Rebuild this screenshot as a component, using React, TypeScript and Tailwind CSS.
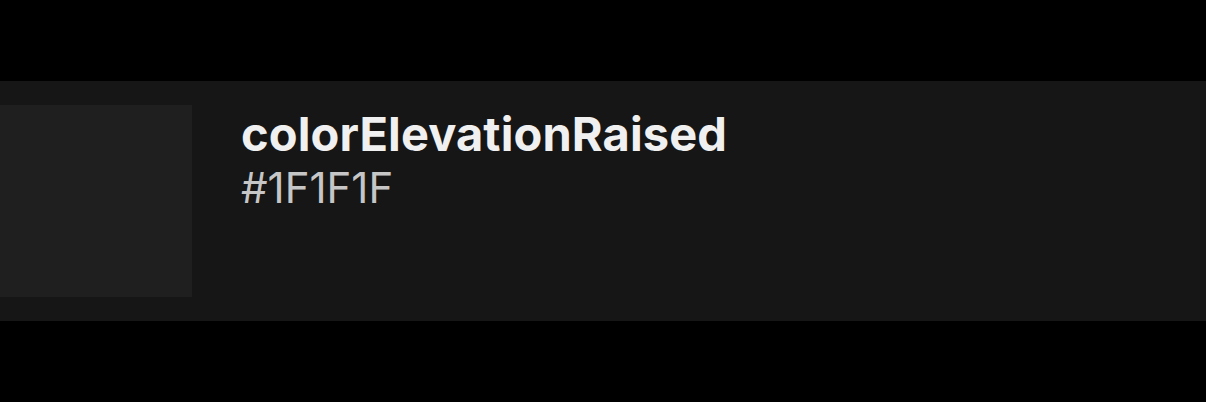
export default function App() {
  return (
    <div className="w-[1206px] h-[402px] bg-black pt-[81px]" style={{ fontFamily: "Inter, 'Noto Sans', sans-serif" }}>
      <div className="h-[240px] bg-[#161616] py-[24px] flex gap-[49px]">
        <div className="w-[192px] h-[192px] bg-[#1F1F1F] shrink-0" />
        <div className="flex flex-col">
          <div className="text-[47px] font-bold leading-[56px] text-[#F0F0F0] mt-[1px] tracking-[0.1px]">colorElevationRaised</div>
          <div className="text-[42px] leading-[48px] text-[#C6C6C6] mt-[2px]">#1F1F1F</div>
        </div>
      </div>
    </div>
  );
}
